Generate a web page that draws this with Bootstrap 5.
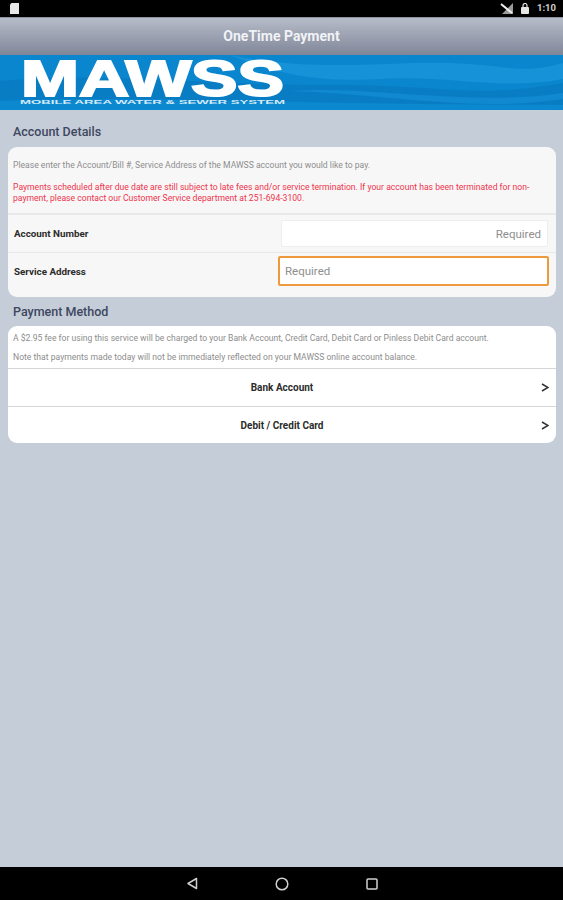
<!DOCTYPE html>
<html lang="en">
<head>
  <meta charset="UTF-8" />
  <meta name="viewport" content="width=device-width, initial-scale=1.0"/>
  <title>OneTime Payment | MAWSS</title>

  <link href="https://cdn.jsdelivr.net/npm/bootstrap@5.3.3/dist/css/bootstrap.min.css" rel="stylesheet" />

  <style>
    html, body { height: 100%; }
    body {
      font-family: "Roboto", "Liberation Sans", sans-serif;
      background-color: #c5cdd8;
      overflow: hidden;
    }
    .screen { height: 900px; }

    .status-strip { height: 17px; background: #000; color: #cfcfcf; padding: 0 7px 0 10px; font-size: 9.5px; font-weight: 700; }
    .title-strip {
      height: 38px;
      background: linear-gradient(#b7bcc9, #7f8698);
      color: #f1f2f5;
      font-size: 14px;
      font-weight: 700;
      border-top: 1px solid #8d93a1;
    }
    .banner-strip { height: 55px; background: #0a84cb; }
    .banner-strip svg { display: block; overflow: visible; }
    .logo-main { font-family: "Liberation Sans", sans-serif; font-weight: 700; font-size: 50px; fill: #fff; stroke: #fff; stroke-width: 2px; }
    .logo-sub { font-family: "Liberation Sans", sans-serif; font-weight: 700; font-size: 5.6px; fill: #d5ebfb; }

    .content-area { padding: 0 7px 0 8px; }
    .group-title { color: #3d4760; font-size: 12.5px; font-weight: 500; padding-left: 5px; line-height: 14px; }
    .title-first { margin-top: 15px; margin-bottom: 8px; }
    .title-next { margin-top: 8px; margin-bottom: 7px; }

    .panel-box { border-radius: 9px; overflow: hidden; font-size: 8.6px; }
    .panel-grey { background: #f7f7f7; height: 150px; }
    .panel-white { background: #fff; height: 117px; }

    .intro-grey { color: #8d8d8d; line-height: 10px; margin-bottom: 12px; }
    .intro-red { color: #f0334d; line-height: 11px; }
    .intro-one { height: 68px; padding: 13px 5px 0 5px; border-bottom: 2px solid #e9e9e9; }
    .intro-two { height: 43px; padding: 7px 5px 0 5px; border-bottom: 1px solid #d4d6da; color: #8d8d8d; }
    .intro-two p { line-height: 10px; margin-bottom: 9px; }

    .field-row { padding-left: 6px; font-size: 9.8px; font-weight: 700; color: #2c2c2c; }
    .field-one { height: 38px; border-bottom: 1px solid #e8e8e8; padding-right: 8px; }
    .field-one label { margin-top: 2px; }
    .field-two { height: 43px; padding-bottom: 8px; padding-right: 7px; }
    .field-two label { margin-top: 4px; }
    .field-input {
      width: 267px;
      height: 27px;
      border: 1px solid #eeeeee;
      border-radius: 2px;
      background: #fff;
      font-size: 11.5px;
      font-weight: 400;
      color: #555;
      padding: 0 6px;
      outline: none;
    }
    .field-input::placeholder { color: #8e8e8e; opacity: 1; }
    .field-one .field-input { text-align: right; }
    .field-two .field-input { width: 271px; height: 30px; border: 2px solid #ee9a3c; padding: 0 5px; }

    .pay-row { height: 37px; position: relative; font-size: 10px; font-weight: 700; color: #2c2c2c; }
    .pay-row + .pay-row { border-top: 1px solid #d4d6da; }
    .pay-arrow { position: absolute; right: 7px; top: 14px; }

    .nav-strip { height: 33px; background: #000; gap: 77px; }
  </style>
</head>

<body>
  <div class="screen d-flex flex-column">

    <!-- Status bar -->
    <div class="status-strip d-flex align-items-center justify-content-between">
      <svg width="9" height="11" viewBox="0 0 9 11"><path d="M0 1.5 1.5 0H9v11H0z" fill="#e6e6e6"/></svg>
      <div class="d-flex align-items-center gap-1">
        <svg width="13" height="11" viewBox="0 0 13 11"><path d="M13 0v11H2z" fill="#9a9a9a"/><path d="M1 1l11 9" stroke="#eee" stroke-width="2"/></svg>
        <svg class="ms-1" width="8" height="11" viewBox="0 0 8 11"><path d="M2 4V2.500a2 2 0 0 1 4 0V4" fill="none" stroke="#e6e6e6" stroke-width="1.200"/><rect y="4" width="8" height="7" rx="1" fill="#e6e6e6"/></svg>
        <span class="ms-1">1:10</span>
      </div>
    </div>

    <!-- Title -->
    <div class="title-strip d-flex align-items-center justify-content-center">OneTime Payment</div>

    <!-- Banner -->
    <div class="banner-strip">
      <svg width="563" height="55" viewBox="0 0 563 55">
        <rect width="563" height="55" fill="#0a86cf"/>
        <path d="M230 0C320 18 390 6 450 8S520 20 563 8V24C500 36 450 20 380 24S270 16 230 0Z" fill="#1592d8"/>
        <path d="M0 26C90 16 210 30 330 30S470 44 563 28V55H0Z" fill="#087dc4"/>
        <path d="M290 36C370 30 470 52 563 38V44C470 58 380 38 290 36Z" fill="#1189d0"/>
        <path d="M0 46C140 40 300 50 563 50V55H0Z" fill="#0b88cf"/>
        <text class="logo-main" x="21" y="41" textLength="263" lengthAdjust="spacingAndGlyphs">MAWSS</text>
        <text class="logo-sub" x="20" y="49" textLength="265" lengthAdjust="spacingAndGlyphs">MOBILE AREA WATER &amp; SEWER SYSTEM</text>
      </svg>
    </div>

    <div class="content-area flex-grow-1">
      <div class="group-title title-first">Account Details</div>
      <div class="panel-box panel-grey">
        <div class="intro-one">
          <p class="intro-grey">Please enter the Account/Bill #, Service Address of the MAWSS account you would like to pay.</p>
          <p class="intro-red mb-0">Payments scheduled after due date are still subject to late fees and/or service termination. If your account has been terminated for non-payment, please contact our Customer Service department at 251-694-3100.</p>
        </div>
        <div class="field-row field-one d-flex align-items-center justify-content-between">
          <label for="account-number">Account Number</label>
          <input class="field-input" id="account-number" type="text" placeholder="Required" />
        </div>
        <div class="field-row field-two d-flex align-items-center justify-content-between">
          <label for="service-address">Service Address</label>
          <input class="field-input" id="service-address" type="text" placeholder="Required" />
        </div>
      </div>

      <div class="group-title title-next">Payment Method</div>
      <div class="panel-box panel-white">
        <div class="intro-two">
          <p>A $2.95 fee for using this service will be charged to your Bank Account, Credit Card, Debit Card or Pinless Debit Card account.</p>
          <p>Note that payments made today will not be immediately reflected on your MAWSS online account balance.</p>
        </div>
        <div class="pay-row d-flex align-items-center justify-content-center">
          Bank Account
          <svg class="pay-arrow" width="8" height="9" viewBox="0 0 8 9"><path d="M1 1l6 3.500L1 8" fill="none" stroke="#333" stroke-width="1.500"/></svg>
        </div>
        <div class="pay-row d-flex align-items-center justify-content-center">
          Debit / Credit Card
          <svg class="pay-arrow" width="8" height="9" viewBox="0 0 8 9"><path d="M1 1l6 3.500L1 8" fill="none" stroke="#333" stroke-width="1.500"/></svg>
        </div>
      </div>
    </div>

    <!-- Android nav -->
    <div class="nav-strip d-flex align-items-center justify-content-center">
      <svg width="12" height="13" viewBox="0 0 12 13"><path d="M10.500 1.500v10L2 6.500z" fill="none" stroke="#cfcfcf" stroke-width="1.500" stroke-linejoin="round"/></svg>
      <svg width="14" height="14" viewBox="0 0 14 14"><circle cx="7" cy="7" r="5.800" fill="none" stroke="#cfcfcf" stroke-width="1.500"/></svg>
      <svg width="12" height="12" viewBox="0 0 12 12"><rect x="1" y="1" width="10" height="10" rx="1" fill="none" stroke="#cfcfcf" stroke-width="1.500"/></svg>
    </div>
  </div>

  <script src="https://cdn.jsdelivr.net/npm/bootstrap@5.3.3/dist/js/bootstrap.bundle.min.js"></script>
</body>
</html>
